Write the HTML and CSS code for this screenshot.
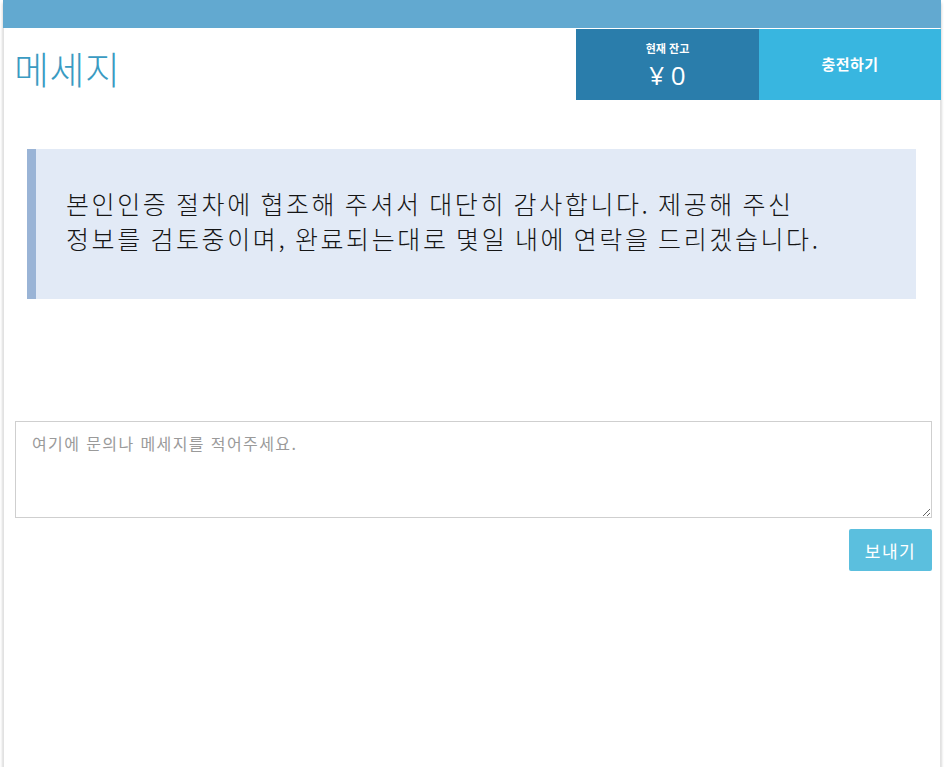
FILE: index.html
```html
<!DOCTYPE html>
<html lang="ko">
<head>
<meta charset="utf-8">
<link rel="stylesheet" href="styles.css">
</head>
<body>
<div class="page">
  <div class="topbar"></div>
  <div class="header">
    <h1 class="title">메세지</h1>
    <div class="balance">
      <div class="balance-label">현재 잔고</div>
      <div class="balance-value">¥ 0</div>
    </div>
    <div class="charge">충전하기</div>
  </div>
  <div class="notice">
    <p>본인인증 절차에 협조해 주셔서 대단히 감사합니다. 제공해 주신<br>정보를 검토중이며, 완료되는대로 몇일 내에 연락을 드리겠습니다.</p>
  </div>
  <div class="compose">
    <textarea class="message" placeholder="여기에 문의나 메세지를 적어주세요."></textarea>
    <div class="actions"><button class="send">보내기</button></div>
  </div>
</div>
</body>
</html>
```
FILE: styles.css
```css
html, body {
  margin: 0;
  padding: 0;
  background: #fff;
}
body {
  font-family: "Noto Sans CJK KR", "Noto Sans", sans-serif;
}
.page {
  width: 936px;
  height: 767px;
  margin-left: 3px;
  border-left: 1px solid #e2e2e2;
  border-right: 1px solid #e2e2e2;
  box-shadow: 0 3px 3px rgba(0,0,0,0.25);
  background: #fff;
  display: flex;
  flex-direction: column;
}
.topbar {
  height: 28px;
  background: #62a9d0;
  margin: 0 -1px;
}
.header {
  display: flex;
  height: 71px;
  border-top: 1px solid #fff;
}
.title {
  flex: 1;
  margin: 0;
  padding-left: 10px;
  font-size: 38px;
  font-weight: 300;
  color: #3a9bc2;
  line-height: 78px;
  height: 71px;
  letter-spacing: 0.5px;
}
.balance {
  width: 183px;
  background: #2a7dab;
  color: #fff;
  display: flex;
  flex-direction: column;
  align-items: center;
  justify-content: center;
}
.balance-label {
  font-size: 11px;
  font-weight: 700;
  line-height: 14px;
  margin-top: 0;
}
.balance-value {
  font-size: 26px;
  line-height: 28px;
  margin-top: 6px;
  font-family: "Open Sans", "Noto Sans CJK KR", sans-serif;
}
.charge {
  width: 182px;
  margin-right: -1px;
  background: #38b6e0;
  color: #fff;
  font-size: 15px;
  font-weight: 700;
  letter-spacing: 0.5px;
  display: flex;
  align-items: center;
  justify-content: center;
  padding-bottom: 3px;
  box-sizing: border-box;
}
.notice {
  margin: 49px 24px 0 23px;
  height: 150px;
  box-sizing: border-box;
  background: #e2eaf6;
  border-left: 9px solid #9ab4d6;
  display: flex;
  align-items: center;
  padding-left: 30px;
  padding-bottom: 6px;
}
.notice p {
  margin: 0;
  font-size: 25px;
  font-weight: 300;
  line-height: 35px;
  color: #151515;
  letter-spacing: 2.6px;
  word-spacing: -2px;
}
.compose {
  margin: 122px 8px 0 11px;
}
.message {
  display: block;
  width: 100%;
  height: 97px;
  box-sizing: border-box;
  border: 1px solid #cfcfcf;
  padding: 9px 16px;
  font-family: "Noto Sans CJK KR", "Noto Sans", sans-serif;
  font-size: 16px;
  letter-spacing: 1.4px;
  color: #333;
  resize: vertical;
  outline: none;
}
.message::placeholder {
  color: #9a9a9a;
}
.actions {
  display: flex;
  justify-content: flex-end;
  margin-top: 11px;
}
.send {
  width: 83px;
  height: 42px;
  border: none;
  border-radius: 2px;
  background: #5bbfde;
  color: #fff;
  font-family: "Noto Sans CJK KR", "Noto Sans", sans-serif;
  font-size: 17px;
  letter-spacing: 1.5px;
  cursor: pointer;
}
```
